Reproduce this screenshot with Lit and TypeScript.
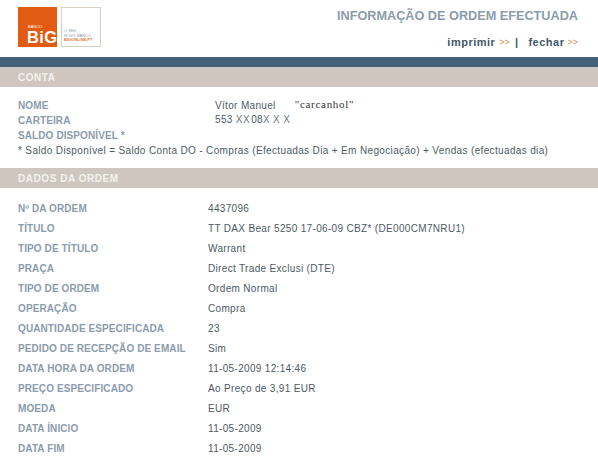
import { LitElement, html, css } from "lit";
import { customElement } from "lit/decorators.js";

const rows: [string, string][] = [
  ["Nº DA ORDEM", "4437096"],
  ["TÍTULO", "TT DAX Bear 5250 17-06-09 CBZ* (DE000CM7NRU1)"],
  ["TIPO DE TÍTULO", "Warrant"],
  ["PRAÇA", "Direct Trade Exclusi (DTE)"],
  ["TIPO DE ORDEM", "Ordem Normal"],
  ["OPERAÇÃO", "Compra"],
  ["QUANTIDADE ESPECIFICADA", "23"],
  ["PEDIDO DE RECEPÇÃO DE EMAIL", "Sim"],
  ["DATA HORA DA ORDEM", "11-05-2009 12:14:46"],
  ["PREÇO ESPECIFICADO", "Ao Preço de 3,91 EUR"],
  ["MOEDA", "EUR"],
  ["DATA ÍNICIO", "11-05-2009"],
  ["DATA FIM", "11-05-2009"],
];

@customElement("app-root")
export class AppRoot extends LitElement {
  static styles = css`
    :host { display: block; width: 598px; height: 467px; overflow: hidden; background: #fff; font-family: "Liberation Sans", Arial, sans-serif; font-size: 10px; letter-spacing: 0.33px; color: #4d5a64; }
    .header { height: 57px; display: flex; justify-content: space-between; padding: 7px 20px 0 18px; box-sizing: border-box; }
    .logo { display: flex; gap: 4px; height: 40px; letter-spacing: 0; }
    .big { width: 39px; height: 40px; background: #e35a12; color: #fff; display: flex; flex-direction: column; justify-content: flex-end; padding: 0 0 3px 9px; box-sizing: border-box; font-weight: bold; }
    .banco { font-size: 4px; line-height: 5px; font-weight: normal; padding-left: 1px; margin-bottom: 1px; }
    .bigname { font-size: 16.5px; line-height: 14px; letter-spacing: 0.4px; }
    .tag { width: 40px; height: 40px; border: 1px solid #d8cfc6; box-sizing: border-box; display: flex; flex-direction: column; justify-content: flex-end; padding: 0 0 3px 2px; font-size: 4px; line-height: 4.6px; color: #8a9aa8; white-space: nowrap; }
    .tag b { color: #e07a3a; }
    .right { display: flex; flex-direction: column; align-items: flex-end; }
    h1 { margin: 1px 0 0; font-size: 12.7px; letter-spacing: 0; line-height: 16px; font-weight: bold; color: #8b9cac; }
    .links { margin-top: 12px; font-size: 11px; line-height: 13px; font-weight: bold; letter-spacing: 0.5px; color: #44586a; display: flex; }
    .links i { font-style: normal; font-weight: normal; letter-spacing: 0; color: #d98b4a; font-size: 9px; margin-left: 4px; }
    .links i.last { margin-left: 3px; }
    .links .sep { margin: 0 10px 0 5px; }
    .bar { height: 10px; background: #44617a; }
    .section { height: 20px; background: #cfc7bf; color: #f4f1ec; font-weight: bold; font-size: 10px; letter-spacing: 0.55px; line-height: 21px; padding-left: 18px; }
    .account { padding: 11px 0 0 18px; height: 81px; box-sizing: border-box; line-height: 15px; }
    .acc-row { display: grid; grid-template-columns: 197px 1fr; height: 15px; }
    .label { font-weight: bold; color: #8b9cac; letter-spacing: 0.1px; }
    .acc-val { margin-top: -1px; }
    .nick { font-family: "Liberation Serif", serif; font-size: 11px; letter-spacing: 0.7px; margin-left: 16px; color: #333; vertical-align: 1px; }
    .x1 { letter-spacing: 0.5px; margin-right: 1px; color: #6d7780; }
    .x2 { letter-spacing: 3.5px; color: #6d7780; }
    .note { height: 15px; white-space: nowrap; letter-spacing: 0.35px; }
    .order { padding: 11px 0 0 18px; }
    .row { display: grid; grid-template-columns: 190px 1fr; height: 20px; line-height: 20px; }
  `;

  render() {
    return html`
      <div class="header">
        <div class="logo">
          <div class="big"><span class="banco">BANCO</span><span class="bigname">BiG</span></div>
          <div class="tag"><span>O SEU</span><span>NOVO BANCO</span><b>BIGONLINE.PT</b></div>
        </div>
        <div class="right">
          <h1>INFORMAÇÃO DE ORDEM EFECTUADA</h1>
          <div class="links"><span>imprimir</span><i>&gt;&gt;</i><span class="sep">|</span><span>fechar</span><i class="last">&gt;&gt;</i></div>
        </div>
      </div>
      <div class="bar"></div>
      <div class="section">CONTA</div>
      <div class="account">
        <div class="acc-row"><span class="label">NOME</span><span class="acc-val">Vítor Manuel <span class="nick">"carcanhol"</span></span></div>
        <div class="acc-row"><span class="label">CARTEIRA</span><span class="acc-val">553 <span class="x1">XX</span>08<span class="x2">XXX</span></span></div>
        <div class="acc-row"><span class="label">SALDO DISPONÍVEL *</span><span></span></div>
        <div class="note">* Saldo Disponível = Saldo Conta DO - Compras (Efectuadas Dia + Em Negociação) + Vendas (efectuadas dia)</div>
      </div>
      <div class="section">DADOS DA ORDEM</div>
      <div class="order">
        ${rows.map(([l, v]) => html`<div class="row"><span class="label">${l}</span><span>${v}</span></div>`)}
      </div>
    `;
  }
}
